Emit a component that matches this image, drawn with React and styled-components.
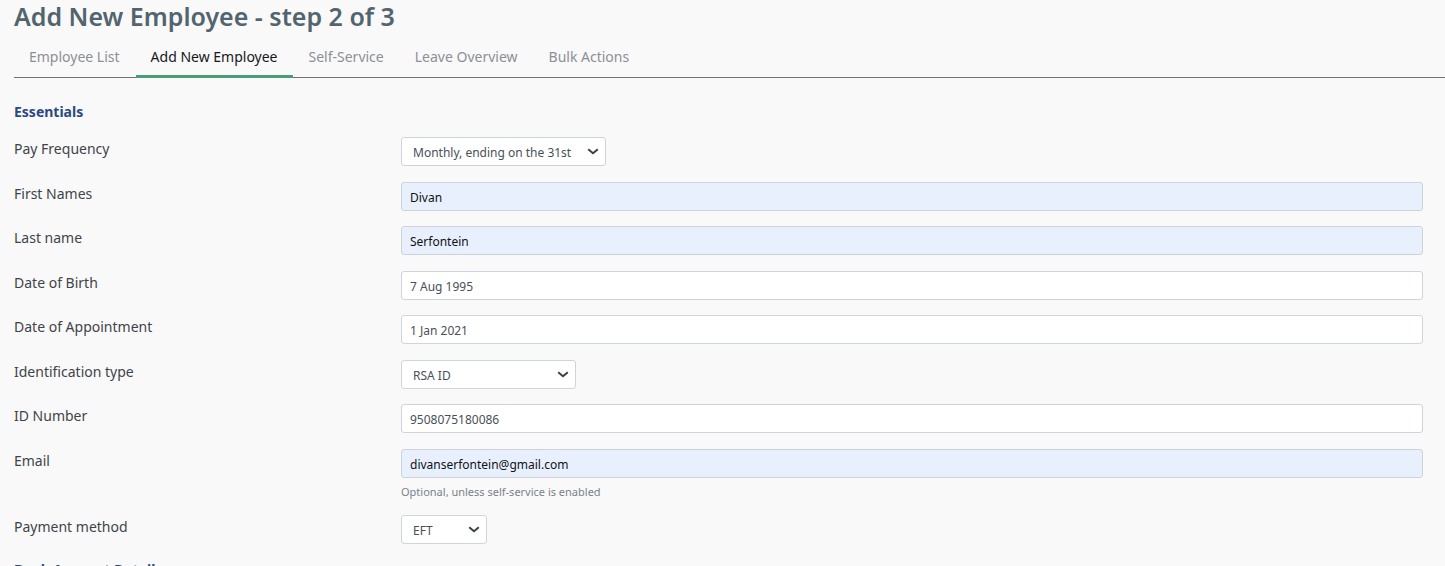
import React from "react";
import styled, { createGlobalStyle, css } from "styled-components";

const GlobalStyle = createGlobalStyle`
  *, *::before, *::after { box-sizing: border-box; }
  html { scrollbar-width: none; }
  body {
    margin: 0;
    background: #f9f9f9;
    color: #3f444a;
    font-family: "Segoe UI", "Noto Sans", "Open Sans", sans-serif;
    font-size: 14px;
    line-height: 20px;
  }
`;

const Page = styled.main`
  padding-left: 14px;
`;

const Title = styled.h1`
  margin: 0;
  font-size: 25px;
  line-height: 32px;
  font-weight: 600;
  color: #52656f;
`;

const Tabs = styled.nav`
  display: flex;
  gap: 1px;
  margin-top: 8px;
  border-bottom: 1px solid #6f7073;
`;

const Tab = styled.a`
  padding: 7px 15px 8px;
  margin-bottom: -1px;
  border-bottom: 3px solid ${(p) => (p.$active ? "#4a9c7b" : "transparent")};
  color: ${(p) => (p.$active ? "#16181b" : "#8b9096")};
  text-decoration: none;
  white-space: nowrap;
`;

const Form = styled.form`
  padding: 24px 22px 0 0;
`;

const SectionTitle = styled.h2`
  margin: 0;
  font-size: 14px;
  line-height: 20px;
  font-weight: 700;
  color: #2a4a82;
`;

const Rows = styled.div`
  margin: 15px 0 16px;
`;

const Row = styled.div`
  display: grid;
  grid-template-columns: 387px minmax(0, 1fr);
  align-items: start;
  margin-bottom: 15px;
  &:nth-child(odd) { margin-bottom: 16px; }
`;

const Label = styled.label`
  padding-top: 2px;
`;

const control = css`
  display: block;
  height: 29px;
  border: 1px solid #ced4da;
  border-radius: 3px;
  background: #ffffff;
  color: #495057;
  font-family: inherit;
  font-size: 12px;
  line-height: 18px;
`;

const TextInput = styled.input`
  ${control}
  width: 100%;
  padding: 6px 8px 4px;
  ${(p) => p.$filled && css`
    background: #e8f0fe;
    color: #101216;
  `}
`;

const SelectBox = styled.div`
  position: relative;
  width: ${(p) => p.$width}px;
`;

const Select = styled.select`
  ${control}
  appearance: none;
  width: 100%;
  padding: 6px 24px 4px 11px;
`;

const Chevron = styled.svg`
  position: absolute;
  right: 7px;
  top: 11px;
  pointer-events: none;
`;

const Help = styled.small`
  display: block;
  margin-top: 5px;
  font-size: 11px;
  line-height: 17px;
  color: #7a828a;
`;

const tabs = ["Employee List", "Add New Employee", "Self-Service", "Leave Overview", "Bulk Actions"];

const fields = [
  { id: "frequency", label: "Pay Frequency", value: "Monthly, ending on the 31st", width: 205 },
  { id: "first", label: "First Names", value: "Divan", filled: true },
  { id: "last", label: "Last name", value: "Serfontein", filled: true },
  { id: "birth", label: "Date of Birth", value: "7 Aug 1995" },
  { id: "appointed", label: "Date of Appointment", value: "1 Jan 2021" },
  { id: "idtype", label: "Identification type", value: "RSA ID", width: 175 },
  { id: "idnumber", label: "ID Number", value: "9508075180086" },
  { id: "email", label: "Email", value: "divanserfontein@gmail.com", filled: true, help: "Optional, unless self-service is enabled" },
  { id: "payment", label: "Payment method", value: "EFT", width: 86 },
];

function Field({ id, label, value, width, filled, help }) {
  return (
    <Row>
      <Label htmlFor={id}>{label}</Label>
      <div>
        {width ? (
          <SelectBox $width={width}>
            <Select id={id} defaultValue={value}>
              <option>{value}</option>
            </Select>
            <Chevron width="12" height="8" viewBox="0 0 12 8" fill="none" stroke="#3b4045" strokeWidth="2">
              <path d="M1.2 1.2 6 5.2l4.8-4" />
            </Chevron>
          </SelectBox>
        ) : (
          <TextInput id={id} type="text" defaultValue={value} $filled={filled} aria-describedby={help ? `${id}-help` : undefined} />
        )}
        {help && <Help id={`${id}-help`}>{help}</Help>}
      </div>
    </Row>
  );
}

export default function App() {
  return (
    <Page>
      <GlobalStyle />
      <Title>Add New Employee - step 2 of 3</Title>
      <Tabs>
        {tabs.map((name) => (
          <Tab key={name} href="#" $active={name === "Add New Employee"}>{name}</Tab>
        ))}
      </Tabs>
      <Form>
        <SectionTitle>Essentials</SectionTitle>
        <Rows>
          {fields.map((f) => <Field key={f.id} {...f} />)}
        </Rows>
        <SectionTitle>Bank Account Details</SectionTitle>
      </Form>
    </Page>
  );
}
